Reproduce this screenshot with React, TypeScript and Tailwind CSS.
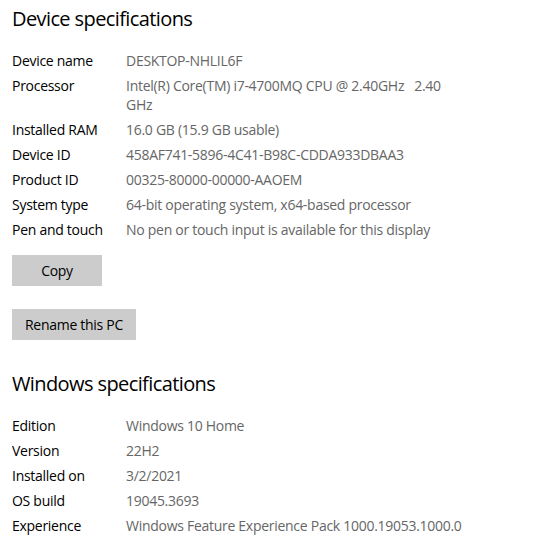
import React from "react";

interface SpecRow {
  label: string;
  value: string;
}

const deviceSpecs: SpecRow[] = [
  { label: "Device name", value: "DESKTOP-NHLIL6F" },
  { label: "Processor", value: "Intel(R) Core(TM) i7-4700MQ CPU @ 2.40GHz   2.40\nGHz" },
  { label: "Installed RAM", value: "16.0 GB (15.9 GB usable)" },
  { label: "Device ID", value: "458AF741-5896-4C41-B98C-CDDA933DBAA3" },
  { label: "Product ID", value: "00325-80000-00000-AAOEM" },
  { label: "System type", value: "64-bit operating system, x64-based processor" },
  { label: "Pen and touch", value: "No pen or touch input is available for this display" },
];

const windowsSpecs: SpecRow[] = [
  { label: "Edition", value: "Windows 10 Home" },
  { label: "Version", value: "22H2" },
  { label: "Installed on", value: "3/2/2021" },
  { label: "OS build", value: "19045.3693" },
  { label: "Experience", value: "Windows Feature Experience Pack 1000.19053.1000.0" },
];

function SpecList({ rows }: { rows: SpecRow[] }) {
  return (
    <div className="flex flex-col gap-[6px]">
      {rows.map((row, index) => (
        <div key={index} className="flex flex-row text-[14px] leading-[19px] tracking-[-0.28px]">
          <div className="w-[114px] shrink-0 text-[#000000]">{row.label}</div>
          <div className="w-[400px] text-[#666666] whitespace-pre-wrap">{row.value}</div>
        </div>
      ))}
    </div>
  );
}

export default function App() {
  return (
    <div
      className="w-[535px] h-[544px] bg-white pl-3 pt-[5px] overflow-hidden"
      style={{ fontFamily: '"Open Sans", "Noto Sans", sans-serif' }}
    >
      <h1 className="text-[20px] leading-[28px] tracking-[-0.6px] text-black">Device specifications</h1>
      <div className="mt-[18px]">
        <SpecList rows={deviceSpecs} />
      </div>
      <button className="mt-[16px] w-[90px] h-[31px] bg-[#cccccc] text-[14px] tracking-[-0.28px] text-black">
        Copy
      </button>
      <div>
        <button className="mt-[23px] w-[124px] h-[31px] bg-[#cccccc] text-[14px] tracking-[-0.28px] text-black">
          Rename this PC
        </button>
      </div>
      <h1 className="mt-[30px] text-[20px] leading-[28px] tracking-[-0.6px] text-black">Windows specifications</h1>
      <div className="mt-[18px]">
        <SpecList rows={windowsSpecs} />
      </div>
    </div>
  );
}
